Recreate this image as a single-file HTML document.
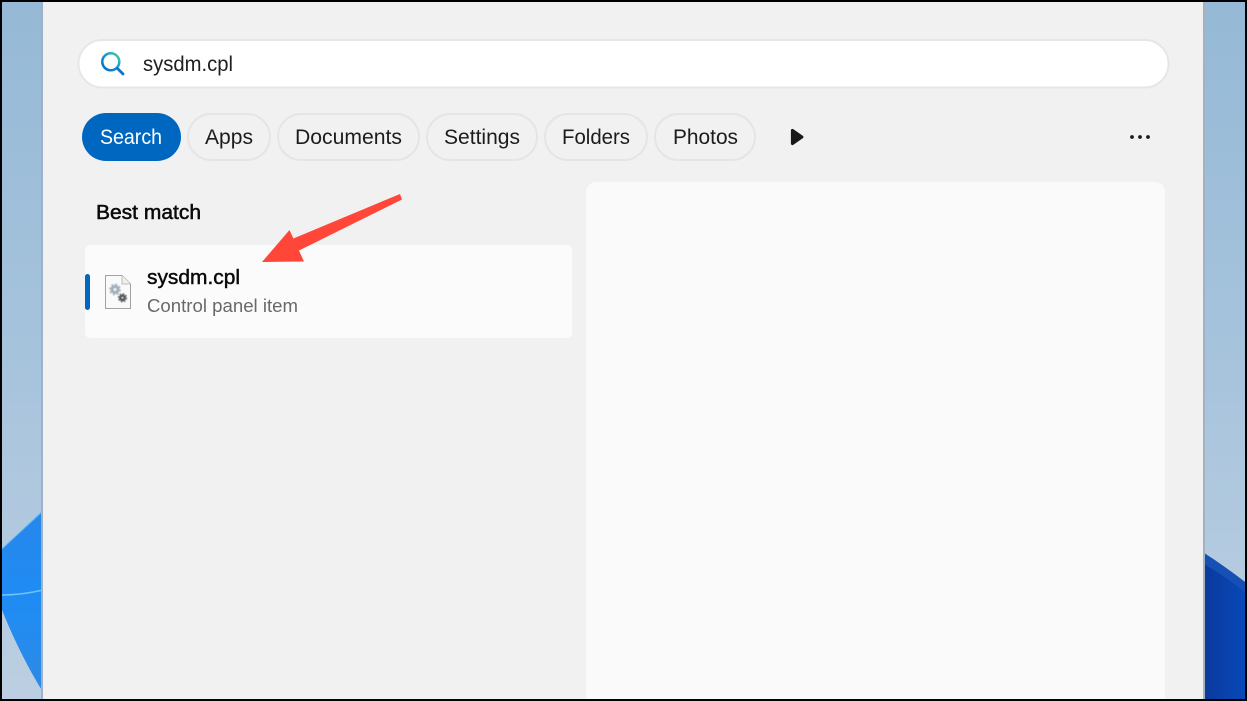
<!DOCTYPE html>
<html lang="en">
<head>
<meta charset="utf-8">
<title>Search</title>
<style>
html,body{margin:0;padding:0;width:1247px;height:701px;overflow:hidden;background:#000}
svg{display:block}
text{font-family:"Liberation Sans",sans-serif}
</style>
</head>
<body>
<svg width="1247" height="701" viewBox="0 0 1247 701" xmlns="http://www.w3.org/2000/svg">
<defs>
<linearGradient id="sky" x1="0" y1="0" x2="0" y2="1">
<stop offset="0" stop-color="#95b9d6"/>
<stop offset="0.5" stop-color="#a6c3dc"/>
<stop offset="1" stop-color="#bccfe2"/>
</linearGradient>
<linearGradient id="bloomL" x1="0" y1="0" x2="0" y2="1">
<stop offset="0" stop-color="#2787ec"/>
<stop offset="0.5" stop-color="#1f8cf3"/>
<stop offset="1" stop-color="#2d8ae6"/>
</linearGradient>
<linearGradient id="bloomR" x1="0" y1="0" x2="1" y2="0">
<stop offset="0" stop-color="#0a3a9c"/>
<stop offset="1" stop-color="#0848b8"/>
</linearGradient>
<linearGradient id="q" gradientUnits="userSpaceOnUse" x1="102" y1="71" x2="120" y2="53">
<stop offset="0" stop-color="#0067c0"/>
<stop offset="0.6" stop-color="#1a9ad6"/>
<stop offset="1" stop-color="#4fdc8a"/>
</linearGradient>
<filter id="soft" x="-20%" y="-20%" width="140%" height="140%"><feGaussianBlur stdDeviation="0.4"/></filter>
</defs>

<rect width="1247" height="701" fill="#000"/>
<rect x="2" y="2" width="1243" height="697" fill="url(#sky)"/>

<!-- wallpaper bloom left -->
<path d="M2 549 C16 536 30 523 43 511 L43 692 C28 668 14 640 2 610Z" fill="url(#bloomL)"/>
<path d="M2 549 C16 536 30 523 43 511" fill="none" stroke="#55b4f6" stroke-width="1"/>
<path d="M2 595 C16 595 30 593 43 590" fill="none" stroke="#6cc4fa" stroke-width="1.5"/>

<!-- wallpaper bloom right -->
<path d="M1204 553 C1218 562 1232 572 1245 582 L1245 699 L1204 699Z" fill="url(#bloomR)"/>
<path d="M1204 553 C1218 562 1232 572 1245 582 L1245 592 C1232 582 1218 572 1204 564Z" fill="#1650b4"/>

<!-- panel -->
<rect x="41" y="2" width="2" height="697" fill="#9db2c8"/>
<rect x="1203" y="2" width="2" height="697" fill="#a2b2c2"/>
<rect x="43" y="2" width="1160" height="697" fill="#f1f1f1"/>

<!-- search box -->
<rect x="78.500" y="40" width="1090" height="47.500" rx="23.700" fill="#fff" stroke="#e6e6e6" stroke-width="2"/>
<circle cx="110.800" cy="61.800" r="8.500" fill="none" stroke="url(#q)" stroke-width="2.500"/>
<path d="M117.500 68.500L123 74" stroke="#0a78c8" stroke-width="2.800" stroke-linecap="round"/>
<text x="143" y="71" font-size="21" fill="#1f1f1f" textLength="90" lengthAdjust="spacingAndGlyphs">sysdm.cpl</text>

<!-- pills -->
<rect x="82" y="113" width="99" height="48" rx="24" fill="#0067c0"/>
<text x="100" y="144" font-size="21" fill="#fff" textLength="62" lengthAdjust="spacingAndGlyphs">Search</text>

<g fill="#f1f1f1" stroke="#e5e5e5" stroke-width="2">
<rect x="188" y="114" width="82" height="46" rx="23"/>
<rect x="278" y="114" width="141" height="46" rx="23"/>
<rect x="427" y="114" width="110" height="46" rx="23"/>
<rect x="545" y="114" width="102" height="46" rx="23"/>
<rect x="655" y="114" width="100" height="46" rx="23"/>
</g>
<g font-size="21" fill="#1c1c1c">
<text x="205" y="144" textLength="48" lengthAdjust="spacingAndGlyphs">Apps</text>
<text x="295" y="144" textLength="107" lengthAdjust="spacingAndGlyphs">Documents</text>
<text x="444" y="144" textLength="76" lengthAdjust="spacingAndGlyphs">Settings</text>
<text x="562" y="144" textLength="68" lengthAdjust="spacingAndGlyphs">Folders</text>
<text x="673" y="144" textLength="65" lengthAdjust="spacingAndGlyphs">Photos</text>
</g>

<!-- play chevron -->
<path d="M792.500 130.500L801.800 137L792.500 143.500Z" fill="#191919" stroke="#191919" stroke-width="3.200" stroke-linejoin="round"/>

<!-- more dots -->
<circle cx="1132" cy="137" r="1.900" fill="#1a1a1a"/>
<circle cx="1140" cy="137" r="1.900" fill="#1a1a1a"/>
<circle cx="1148" cy="137" r="1.900" fill="#1a1a1a"/>

<!-- best match -->
<text x="96" y="219" font-size="20" fill="#0a0a0a" stroke="#0a0a0a" stroke-width="0.500" textLength="105" lengthAdjust="spacingAndGlyphs">Best match</text>

<!-- result card -->
<rect x="85" y="245" width="487" height="93" rx="5" fill="#fbfbfb"/>
<rect x="85" y="274" width="5" height="36" rx="2.500" fill="#0067c0"/>

<!-- file icon -->
<path d="M105.500 275.500H122L130.500 284V308.500H105.500Z" fill="#fafafa" stroke="#a2a2a2" stroke-width="1"/>
<path d="M122 275.500V284H130.500" fill="#efefef" stroke="#bdbdbd" stroke-width="1"/>
<g filter="url(#soft)">
<g fill="none" stroke="#a3afbc">
<circle cx="115" cy="289.500" r="3" stroke-width="3"/>
<circle cx="115" cy="289.500" r="5" stroke-width="1.800" stroke-dasharray="2 1.930"/>
</g>
<g fill="none" stroke="#4f565d">
<circle cx="122.500" cy="297.800" r="2.200" stroke-width="2.400"/>
<circle cx="122.500" cy="297.800" r="3.900" stroke-width="1.400" stroke-dasharray="1.600 1.460"/>
</g>
</g>

<text x="147" y="284" font-size="20" fill="#0a0a0a" stroke="#0a0a0a" stroke-width="0.450" textLength="93" lengthAdjust="spacingAndGlyphs">sysdm.cpl</text>
<text x="147" y="312" font-size="18" fill="#696969" textLength="151" lengthAdjust="spacingAndGlyphs">Control panel item</text>

<!-- preview pane -->
<path d="M586 699V192A10 10 0 0 1 596 182H1155A10 10 0 0 1 1165 192V699Z" fill="#fafafa"/>

<!-- arrow -->
<path d="M400 194L402 199.500L296 252L285 245L291 239.500Z" fill="#ff4638"/>
<path d="M262 262L289.500 230L304 261.500Z" fill="#ff4638"/>
</svg>
</body>
</html>
